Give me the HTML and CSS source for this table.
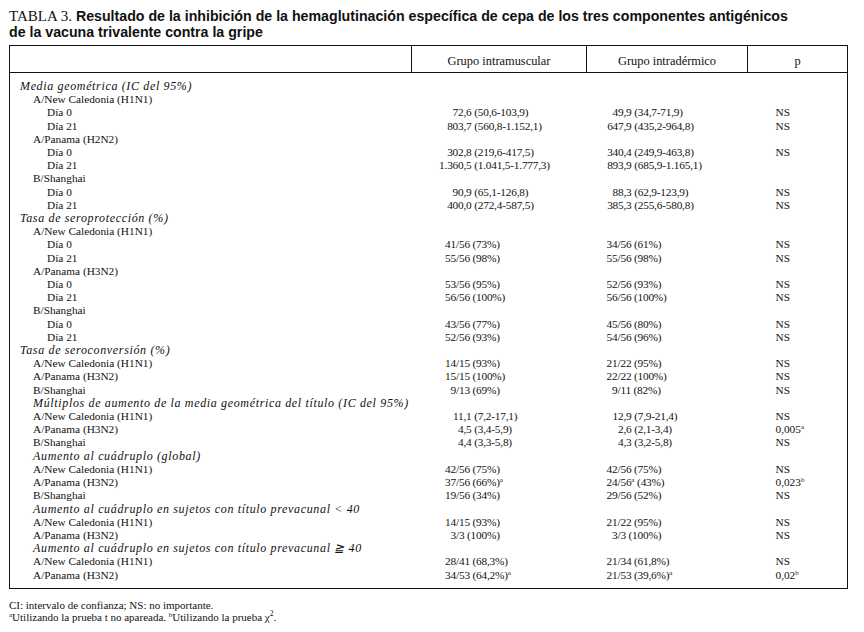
FILE: index.html
```html
<!DOCTYPE html>
<html lang="es">
<head>
<meta charset="utf-8">
<title>Tabla 3</title>
<link rel="stylesheet" href="styles.css">
</head>
<body>
<div class="page">
  <h1 class="title">
    <span class="tline"><span class="tlabel">TABLA 3.</span> Resultado de la inhibición de la hemaglutinación específica de cepa de los tres componentes antigénicos</span>
    <span class="tline">de la vacuna trivalente contra la gripe</span>
  </h1>
  <table class="tbl">
    <colgroup>
      <col class="c-label"><col class="c-im"><col class="c-id"><col class="c-p">
    </colgroup>
    <thead>
      <tr>
        <th></th>
        <th>Grupo intramuscular</th>
        <th>Grupo intradérmico</th>
        <th>p</th>
      </tr>
    </thead>
    <tbody>
      <tr class="first"><td class="l0 it">Media geométrica (IC del 95%)</td><td></td><td></td><td></td></tr>
      <tr><td class="l1">A/New Caledonia (H1N1)</td><td></td><td></td><td></td></tr>
      <tr><td class="l2">Día 0</td><td class="n"><span class="d1">72</span>,6 (50,6-103,9)</td><td class="n"><span class="d2">49</span>,9 (34,7-71,9)</td><td class="p">NS</td></tr>
      <tr><td class="l2">Día 21</td><td class="n"><span class="d1">803</span>,7 (560,8-1.152,1)</td><td class="n"><span class="d2">647</span>,9 (435,2-964,8)</td><td class="p">NS</td></tr>
      <tr><td class="l1">A/Panama (H2N2)</td><td></td><td></td><td></td></tr>
      <tr><td class="l2">Día 0</td><td class="n"><span class="d1">302</span>,8 (219,6-417,5)</td><td class="n"><span class="d2">340</span>,4 (249,9-463,8)</td><td class="p">NS</td></tr>
      <tr><td class="l2">Día 21</td><td class="n"><span class="d1">1.360</span>,5 (1.041,5-1.777,3)</td><td class="n"><span class="d2">893</span>,9 (685,9-1.165,1)</td><td class="p"></td></tr>
      <tr><td class="l1">B/Shanghai</td><td></td><td></td><td></td></tr>
      <tr><td class="l2">Día 0</td><td class="n"><span class="d1">90</span>,9 (65,1-126,8)</td><td class="n"><span class="d2">88</span>,3 (62,9-123,9)</td><td class="p">NS</td></tr>
      <tr><td class="l2">Día 21</td><td class="n"><span class="d1">400</span>,0 (272,4-587,5)</td><td class="n"><span class="d2">385</span>,3 (255,6-580,8)</td><td class="p">NS</td></tr>
      <tr><td class="l0 it">Tasa de seroprotección (%)</td><td></td><td></td><td></td></tr>
      <tr><td class="l1">A/New Caledonia (H1N1)</td><td></td><td></td><td></td></tr>
      <tr><td class="l2">Día 0</td><td class="n"><span class="f1">41</span>/56 (73%)</td><td class="n"><span class="f2">34</span>/56 (61%)</td><td class="p">NS</td></tr>
      <tr><td class="l2">Día 21</td><td class="n"><span class="f1">55</span>/56 (98%)</td><td class="n"><span class="f2">55</span>/56 (98%)</td><td class="p">NS</td></tr>
      <tr><td class="l1">A/Panama (H3N2)</td><td></td><td></td><td></td></tr>
      <tr><td class="l2">Día 0</td><td class="n"><span class="f1">53</span>/56 (95%)</td><td class="n"><span class="f2">52</span>/56 (93%)</td><td class="p">NS</td></tr>
      <tr><td class="l2">Día 21</td><td class="n"><span class="f1">56</span>/56 (100%)</td><td class="n"><span class="f2">56</span>/56 (100%)</td><td class="p">NS</td></tr>
      <tr><td class="l1">B/Shanghai</td><td></td><td></td><td></td></tr>
      <tr><td class="l2">Día 0</td><td class="n"><span class="f1">43</span>/56 (77%)</td><td class="n"><span class="f2">45</span>/56 (80%)</td><td class="p">NS</td></tr>
      <tr><td class="l2">Día 21</td><td class="n"><span class="f1">52</span>/56 (93%)</td><td class="n"><span class="f2">54</span>/56 (96%)</td><td class="p">NS</td></tr>
      <tr><td class="l0 it">Tasa de seroconversión (%)</td><td></td><td></td><td></td></tr>
      <tr><td class="l1">A/New Caledonia (H1N1)</td><td class="n"><span class="f1">14</span>/15 (93%)</td><td class="n"><span class="f2">21</span>/22 (95%)</td><td class="p">NS</td></tr>
      <tr><td class="l1">A/Panama (H3N2)</td><td class="n"><span class="f1">15</span>/15 (100%)</td><td class="n"><span class="f2">22</span>/22 (100%)</td><td class="p">NS</td></tr>
      <tr><td class="l1">B/Shanghai</td><td class="n"><span class="f1">9</span>/13 (69%)</td><td class="n"><span class="f2">9</span>/11 (82%)</td><td class="p">NS</td></tr>
      <tr><td class="l1 it">Múltiplos de aumento de la media geométrica del título (IC del 95%)</td><td></td><td></td><td></td></tr>
      <tr><td class="l1">A/New Caledonia (H1N1)</td><td class="n"><span class="d1">11</span>,1 (7,2-17,1)</td><td class="n"><span class="d2">12</span>,9 (7,9-21,4)</td><td class="p">NS</td></tr>
      <tr><td class="l1">A/Panama (H3N2)</td><td class="n"><span class="d1">4</span>,5 (3,4-5,9)</td><td class="n"><span class="d2">2</span>,6 (2,1-3,4)</td><td class="p">0,005<sup>a</sup></td></tr>
      <tr><td class="l1">B/Shanghai</td><td class="n"><span class="d1">4</span>,4 (3,3-5,8)</td><td class="n"><span class="d2">4</span>,3 (3,2-5,8)</td><td class="p">NS</td></tr>
      <tr><td class="l1 it">Aumento al cuádruplo (global)</td><td></td><td></td><td></td></tr>
      <tr><td class="l1">A/New Caledonia (H1N1)</td><td class="n"><span class="f1">42</span>/56 (75%)</td><td class="n"><span class="f2">42</span>/56 (75%)</td><td class="p">NS</td></tr>
      <tr><td class="l1">A/Panama (H3N2)</td><td class="n"><span class="f1">37</span>/56 (66%)<sup>a</sup></td><td class="n"><span class="f2">24</span>/56<sup>a</sup> (43%)</td><td class="p">0,023<sup>b</sup></td></tr>
      <tr><td class="l1">B/Shanghai</td><td class="n"><span class="f1">19</span>/56 (34%)</td><td class="n"><span class="f2">29</span>/56 (52%)</td><td class="p">NS</td></tr>
      <tr><td class="l1 it">Aumento al cuádruplo en sujetos con título prevacunal &lt; 40</td><td></td><td></td><td></td></tr>
      <tr><td class="l1">A/New Caledonia (H1N1)</td><td class="n"><span class="f1">14</span>/15 (93%)</td><td class="n"><span class="f2">21</span>/22 (95%)</td><td class="p">NS</td></tr>
      <tr><td class="l1">A/Panama (H3N2)</td><td class="n"><span class="f1">3</span>/3 (100%)</td><td class="n"><span class="f2">3</span>/3 (100%)</td><td class="p">NS</td></tr>
      <tr><td class="l1 it">Aumento al cuádruplo en sujetos con título prevacunal ≧ 40</td><td></td><td></td><td></td></tr>
      <tr><td class="l1">A/New Caledonia (H1N1)</td><td class="n"><span class="f1">28</span>/41 (68,3%)</td><td class="n"><span class="f2">21</span>/34 (61,8%)</td><td class="p">NS</td></tr>
      <tr class="last"><td class="l1">A/Panama (H3N2)</td><td class="n"><span class="f1">34</span>/53 (64,2%)<sup>a</sup></td><td class="n"><span class="f2">21</span>/53 (39,6%)<sup>a</sup></td><td class="p">0,02<sup>b</sup></td></tr>
    </tbody>
  </table>
  <div class="notes">
    <p>CI: intervalo de confianza; NS: no importante.</p>
    <p><sup>a</sup>Utilizando la prueba t no apareada. <sup>b</sup>Utilizando la prueba χ<sup class="sq">2</sup>.</p>
  </div>
</div>
</body>
</html>
```

FILE: styles.css
```css
html, body {
  margin: 0;
  padding: 0;
  background: #ffffff;
}

body {
  color: #111111;
  font-family: "Liberation Serif", "Times New Roman", serif;
}

.page {
  padding: 8px 0 0 9px;
  width: 838px;
}

.title {
  margin: 0;
  font-family: "Liberation Sans", Arial, sans-serif;
  font-weight: bold;
  font-size: 14.2px;
  line-height: 16px;
  color: #111111;
}

.tline {
  display: block;
  height: 16px;
  line-height: 16px;
  white-space: nowrap;
}

.tlabel {
  font-family: "Liberation Serif", "Times New Roman", serif;
  font-weight: normal;
  font-size: 15px;
  line-height: 16px;
}

.tbl {
  margin-top: 5px;
  width: 839px;
  border-collapse: collapse;
  table-layout: fixed;
  border: 1px solid #111111;
  font-size: 11.3px;
}

.c-label { width: 402px; }
.c-im { width: 175px; }
.c-id { width: 161px; }
.c-p { width: 100px; }

.tbl th {
  height: 22px;
  padding: 0 0 4px 0;
  vertical-align: bottom;
  font-weight: normal;
  font-size: 12.4px;
  line-height: 13px;
  text-align: center;
  border: 1px solid #111111;
}

.tbl td {
  padding: 0;
  line-height: 13.2px;
  height: 13.2px;
  white-space: nowrap;
  vertical-align: middle;
}

.tbl tr.first td {
  padding-top: 7px;
}

.tbl tr.last td {
  padding-bottom: 6px;
}

.l0 { padding-left: 10px !important; }
.l1 { padding-left: 23px !important; }
.l2 { padding-left: 37px !important; }

.it {
  font-style: italic;
  font-size: 12px;
  letter-spacing: 0.65px;
}

.n {
  letter-spacing: -0.2px;
}

.d1, .f1, .d2, .f2 {
  display: inline-block;
  text-align: right;
}

.d1 { width: 52px; }
.f1 { width: 44.5px; }
.d2 { width: 37px; }
.f2 { width: 31px; }

.p { padding-left: 28px !important; }

sup {
  font-size: 7px;
  line-height: 0;
  vertical-align: 4px;
  letter-spacing: 0;
}

.notes {
  margin-top: 10px;
  font-size: 11px;
  line-height: 12px;
}

.notes p {
  margin: 0;
  height: 12px;
}

.notes .sq {
  font-size: 7.5px;
  vertical-align: 5px;
}
```
